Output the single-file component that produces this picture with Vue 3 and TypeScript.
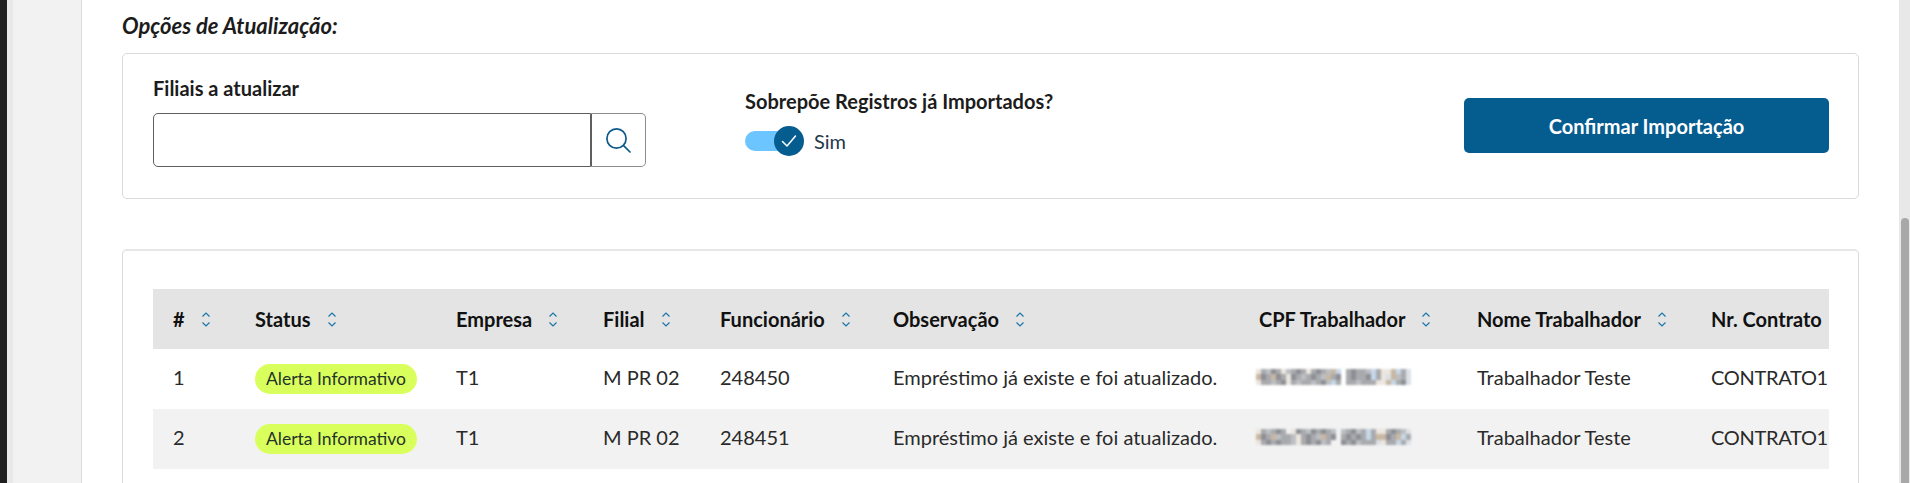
<template>
  <div class="page">
    <div class="rail"></div>
    <main class="content">
      <h2 class="section-title">Opções de Atualização:</h2>

      <section class="card options">
        <div class="branch">
          <label class="field-label">Filiais a atualizar</label>
          <div class="lookup">
            <input class="lookup__input" type="text" />
            <button class="lookup__btn" type="button" aria-label="Buscar">
              <svg width="26" height="26" viewBox="0 0 26 26" fill="none">
                <circle cx="11.5" cy="11.5" r="9.6" stroke="#0b5a8a" stroke-width="1.7" />
                <path d="M18.6 18.6 25 25" stroke="#0b5a8a" stroke-width="1.7" stroke-linecap="round" />
              </svg>
            </button>
          </div>
        </div>

        <div class="overwrite">
          <div class="field-label">Sobrepõe Registros já Importados?</div>
          <div class="switch">
            <span class="switch__track">
              <span class="switch__knob">
                <svg width="16" height="14" viewBox="0 0 16 14" fill="none">
                  <path d="M1.5 7.5 6 12 14.5 2" stroke="#fff" stroke-width="1.5" stroke-linecap="round" stroke-linejoin="round" />
                </svg>
              </span>
            </span>
            <span class="switch__text">Sim</span>
          </div>
        </div>

        <button class="confirm" type="button">Confirmar Importação</button>
      </section>

      <section class="card results">
        <div class="table-wrap">
          <table class="grid">
            <colgroup>
              <col v-for="c in columns" :key="c.label" :style="{ width: c.width + 'px' }" />
            </colgroup>
            <thead>
              <tr>
                <th v-for="c in columns" :key="c.label">
                  <span class="th">
                    {{ c.label }}
                    <svg class="sort" width="10" height="15" viewBox="0 0 10 15" fill="none">
                      <path d="M1.5 4.5 5 1l3.5 3.5M1.5 10.5 5 14l3.5-3.5" stroke="#1a75a8" stroke-width="1.2" />
                    </svg>
                  </span>
                </th>
              </tr>
            </thead>
            <tbody>
              <tr v-for="row in rows" :key="row.id">
                <td>{{ row.id }}</td>
                <td class="cell-badge"><span class="badge">Alerta Informativo</span></td>
                <td>T1</td>
                <td>M PR 02</td>
                <td>{{ row.employee }}</td>
                <td>Empréstimo já existe e foi atualizado.</td>
                <td>
                  <div class="mosaic" aria-label="CPF oculto">
                    <i v-for="(px, i) in row.cpf.join('')" :key="i" :style="{ background: palette[px] }"></i>
                  </div>
                </td>
                <td>Trabalhador Teste</td>
                <td class="cell-contract">CONTRATO1</td>
              </tr>
            </tbody>
          </table>
        </div>
      </section>
    </main>
    <div class="scrollbar"><div class="scrollbar__thumb"></div></div>
  </div>
</template>

<script setup lang="ts">
interface Column {
  label: string;
  width: number;
}

interface Row {
  id: number;
  employee: string;
  cpf: string[];
}

const columns: Column[] = [
  { label: "#", width: 82 },
  { label: "Status", width: 201 },
  { label: "Empresa", width: 147 },
  { label: "Filial", width: 117 },
  { label: "Funcionário", width: 173 },
  { label: "Observação", width: 366 },
  { label: "CPF Trabalhador", width: 218 },
  { label: "Nome Trabalhador", width: 234 },
  { label: "Nr. Contrato", width: 200 },
];

// blurred-out document numbers, one letter per 5px block
const palette: Record<string, string> = {
  g: "#a9aaad",
  d: "#8d8f95",
  l: "#bcbfc3",
  b: "#c6d8ea",
  t: "#c8b7a2",
  p: "#ece6df",
  s: "#dde2e7",
  n: "transparent",
};

const rows: Row[] = [
  {
    id: 1,
    employee: "248450",
    cpf: [
      "pgldgplgdgpgdgltbngdgglbgpptbgs",
      "tdgtdgpdglgdgltgdngdggdbgpstlgs",
      "pgglgdpglgglgdlbgngglgggpptbgds",
    ],
  },
  {
    id: 2,
    employee: "248451",
    cpf: [
      "pglgdgnpdgldgdglnlgdlgbgppgdgls",
      "tdgtlgglpgdgltgdngdgdgbgttdgtbg",
      "pgdgdgglpgdgdlgnndgdlgggspggbgs",
    ],
  },
];
</script>

<style>
html,
body {
  margin: 0;
  height: 100%;
  overflow: hidden;
}
</style>

<style scoped>
.page {
  display: flex;
  height: 483px;
  overflow: hidden;
  background: #fff;
  color: #2a2a2a;
  font-family: Lato, "Noto Sans", sans-serif;
  font-size: 20px;
}

.rail {
  flex: 0 0 81px;
  box-sizing: border-box;
  background: #f2f2f2;
  border-left: 7px solid #1f1f1f;
  box-shadow: inset 6px 0 0 #e8e8e8;
}

.content {
  flex: 1;
  min-width: 0;
  box-sizing: border-box;
  padding: 0 40px;
  border-left: 1px solid #dcdcdc;
}

.section-title {
  margin: 0;
  padding-top: 13px;
  height: 38px;
  box-sizing: border-box;
  line-height: 26px;
  font-size: 22px;
  font-style: italic;
  font-weight: 700;
  color: #1c1c1c;
}

.card {
  box-sizing: border-box;
  border: 1px solid #dadada;
  border-radius: 5px;
}

.options {
  display: flex;
  align-items: flex-start;
  height: 146px;
  margin-top: 15px;
  padding: 22px 29px 0 30px;
}

.branch {
  width: 493px;
  margin-right: 99px;
}

.field-label {
  display: block;
  line-height: 24px;
  font-size: 20px;
  font-weight: 700;
  color: #1c1c1c;
}

.lookup {
  display: flex;
  height: 54px;
  margin-top: 13px;
}

.lookup__input {
  flex: 1;
  min-width: 0;
  box-sizing: border-box;
  border: 1px solid #5f5f5f;
  border-radius: 5px 0 0 5px;
  background: #fff;
}

.lookup__btn {
  display: flex;
  align-items: center;
  justify-content: center;
  width: 55px;
  padding: 0 2px 0 0;
  border: 1px solid #8c8c8c;
  border-left: 1px solid #5f5f5f;
  border-radius: 0 5px 5px 0;
  background: #fff;
}

.overwrite {
  flex: 1;
  margin-top: 13px;
}

.switch {
  display: flex;
  align-items: center;
  margin-top: 13px;
  height: 30px;
}

.switch__track {
  position: relative;
  width: 45px;
  height: 20px;
  border-radius: 10px;
  background: #6cc5ff;
}

.switch__knob {
  position: absolute;
  top: -5px;
  left: 29px;
  display: flex;
  align-items: center;
  justify-content: center;
  width: 30px;
  height: 30px;
  border-radius: 50%;
  background: #055c8f;
}

.switch__text {
  margin-left: 24px;
  color: #24384a;
}

.confirm {
  width: 365px;
  height: 55px;
  margin-top: 22px;
  border: 0;
  border-radius: 5px;
  background: #055c8f;
  color: #fff;
  font-family: inherit;
  font-size: 20px;
  font-weight: 700;
}

.results {
  margin-top: 50px;
  padding: 38px 29px 40px 30px;
  border-top: 2px solid #e6e6e6;
}

.table-wrap {
  overflow: hidden;
}

.grid {
  table-layout: fixed;
  width: 1738px;
  border-collapse: collapse;
}

.grid th,
.grid td {
  box-sizing: border-box;
  height: 60px;
  padding: 0 0 0 20px;
  text-align: left;
  white-space: nowrap;
  overflow: hidden;
}

.grid td {
  padding-bottom: 4px;
}

.grid td.cell-badge {
  padding-bottom: 0;
}

.grid th {
  background: #e4e4e4;
  font-weight: 700;
  color: #111;
}

.grid tbody tr:nth-child(even) {
  background: #f2f2f2;
}

.th {
  display: flex;
  align-items: center;
  gap: 16px;
}

.sort {
  flex: none;
}

.badge {
  display: block;
  width: 162px;
  height: 30px;
  line-height: 30px;
  border-radius: 15px;
  background: #d9ff5c;
  text-align: center;
  font-size: 17.5px;
  color: #25332a;
}

.cell-contract {
  letter-spacing: -0.3px;
}

.mosaic {
  display: grid;
  grid-template-columns: repeat(31, 5px);
  grid-auto-rows: 5.4px;
  width: 155px;
  margin-left: -3px;
  filter: blur(0.8px);
}

.mosaic i {
  display: block;
}

.scrollbar {
  flex: 0 0 11px;
  background: #e8e8e8;
}

.scrollbar__thumb {
  width: 8px;
  height: 265px;
  margin: 218px 0 0 2px;
  border-radius: 4px 4px 0 0;
  background: #a8a8a8;
}
</style>
